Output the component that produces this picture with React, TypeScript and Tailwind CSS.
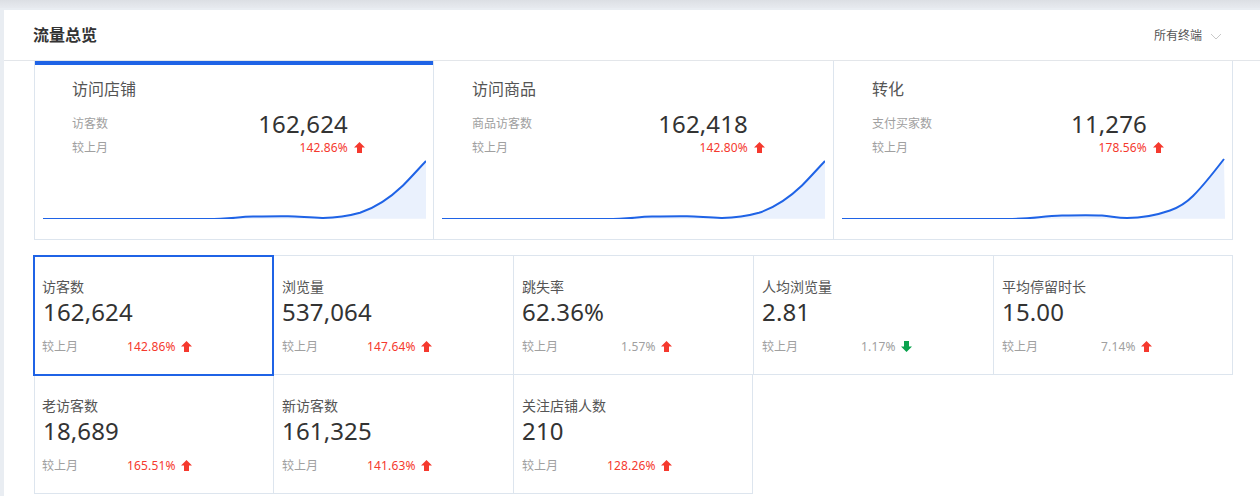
const font = { fontFamily: '"Noto Sans", "Noto Sans CJK SC", sans-serif' };

const storeLine =
  'M0 59 L165 59 C185 59 195 56.9 210 56.6 C225 56.2 235 56 245 56.2 C258 56.5 268 58 280 57.9 C295 57.8 306 55.9 317 52.8 C333 47.5 348 37 360 25.5 C368 17.5 375 9.5 383 1';

const overview = [
  { title: '访问店铺', name: '访客数', value: '162,624', rate: '142.86%', active: true, box: 'w-[399px] pl-[37px]', row: 'w-[276px]', chart: '-ml-[29px]', line: storeLine },
  { title: '访问商品', name: '商品访客数', value: '162,418', rate: '142.80%', active: false, box: 'w-[400px] pl-[38px]', row: 'w-[276px]', chart: '-ml-[30px]', line: storeLine },
  {
    title: '转化',
    name: '支付买家数',
    value: '11,276',
    rate: '178.56%',
    active: false,
    box: 'w-[398px] pl-[38px]',
    row: 'w-[275px]',
    chart: '-ml-[30px]',
    line: 'M0 59 L165 59 C190 59 200 56 220 55.6 C235 55.2 250 55 260 55.6 C270 56.4 275 58 285 58 C300 58 315 55 328 50.5 C338 47 344 43 351 36 C362 25 372 12 382 -1',
  },
];

const metrics = [
  { label: '访客数', value: '162,624', rate: '142.86%', gap: 'ml-[49px]', red: true, up: true, active: true },
  { label: '浏览量', value: '537,064', rate: '147.64%', gap: 'ml-[49px]', red: true, up: true },
  { label: '跳失率', value: '62.36%', rate: '1.57%', gap: 'ml-[63px]', red: false, up: true },
  { label: '人均浏览量', value: '2.81', rate: '1.17%', gap: 'ml-[63px]', red: false, up: false },
  { label: '平均停留时长', value: '15.00', rate: '7.14%', gap: 'ml-[63px]', red: false, up: true, narrow: true },
  { label: '老访客数', value: '18,689', rate: '165.51%', gap: 'ml-[49px]', red: true, up: true },
  { label: '新访客数', value: '161,325', rate: '141.63%', gap: 'ml-[49px]', red: true, up: true },
  { label: '关注店铺人数', value: '210', rate: '128.26%', gap: 'ml-[49px]', red: true, up: true, narrow: true },
];

function Arrow({ up = true, className = '' }: { up?: boolean; className?: string }) {
  return (
    <svg width="11" height="11" viewBox="0 0 11 11" className={`shrink-0 ${className}`}>
      {up ? (
        <path d="M5.5 0 L11 5.4 L8 5.4 L8 11 L3 11 L3 5.4 L0 5.4 Z" fill="#f5392e" />
      ) : (
        <path d="M3 0 L8 0 L8 5.6 L11 5.6 L5.5 11 L0 5.6 L3 5.6 Z" fill="#0ba34e" />
      )}
    </svg>
  );
}

function Chart({ line, className }: { line: string; className: string }) {
  return (
    <svg width="383" height="62" viewBox="0 -3 383 62" className={className}>
      <path d={`${line} L383 58.7 L0 58.7 Z`} fill="#eaf1fd" />
      <path d={line} fill="none" stroke="#1f63e6" strokeWidth="2" />
    </svg>
  );
}

export default function App() {
  return (
    <div className="w-[1260px] h-[496px] overflow-hidden bg-[#e9edf2] pt-[10px] pl-[4px] relative" style={font}>
      <div className="absolute left-0 right-0 top-0 h-[8px] bg-gradient-to-b from-[#dcdfe4] to-[#e7eaef]" />
      <div className="bg-white h-[486px]">
        <div className="h-[51px] border-b border-[#e3e6ea] flex items-center justify-between pl-[29px] pr-[38px]">
          <span className="text-[16px] font-bold text-[#333]">流量总览</span>
          <div className="flex items-center text-[12px] text-[#555] mt-[2px]">
            <span>所有终端</span>
            <svg width="12" height="7" viewBox="0 0 12 7" className="ml-[8px]">
              <path d="M1 1 L6 6 L11 1" fill="none" stroke="#c8c8c8" strokeWidth="1" />
            </svg>
          </div>
        </div>

        <div className="pl-[30px]">
          <div className="flex w-[1199px] h-[179px] border-x border-b border-[#dde5ee]">
            {overview.map((item) => (
              <div key={item.title} className={`relative shrink-0 pt-[18px] border-r border-[#dde5ee] last:border-r-0 ${item.box}`}>
                {item.active && <div className="absolute left-0 right-0 top-0 h-[4px] bg-[#1f63e6]" />}
                <div className="text-[16px] leading-[20px] text-[#555]">{item.title}</div>
                <div className={`mt-[10px] flex items-center justify-between ${item.row}`}>
                  <span className="text-[12px] text-[#a0a0a0]">{item.name}</span>
                  <span className="text-[24px] leading-[30px] tracking-[0.15px] text-[#333]">{item.value}</span>
                </div>
                <div className={`h-[18px] flex items-center justify-between text-[12px] ${item.row}`}>
                  <span className="text-[#a0a0a0]">较上月</span>
                  <div className="flex items-center tracking-[0.15px] text-[#f5392e] -mr-[17px]">
                    {item.rate}
                    <Arrow className="ml-[6px] -mt-[2px]" />
                  </div>
                </div>
                <Chart line={item.line} className={item.chart} />
              </div>
            ))}
          </div>

          <div className="mt-[15px] grid grid-cols-[repeat(5,240px)] w-[1200px]">
            {metrics.map((m, i) => (
              <div
                key={m.label}
                className={`pl-[8px] pt-[22px] border-[#dde5ee] border-b border-r ${i < 5 ? 'h-[120px] border-t' : 'h-[119px]'} ${i % 5 === 0 ? 'border-l' : ''} ${m.active ? 'relative' : ''} ${m.narrow ? 'w-[239px]' : ''}`}
              >
                {m.active && <div className="absolute -left-[2px] -top-px -right-px -bottom-[2px] border-2 border-[#1f63e6]" />}
                <div className={`text-[14px] leading-[18px] text-[#555] ${i % 5 === 0 ? '-ml-px' : ''}`}>{m.label}</div>
                <div className="text-[24px] leading-[32px] tracking-[0.15px] text-[#333]">{m.value}</div>
                <div className={`mt-[10px] flex items-center text-[12px] leading-[18px] ${i % 5 === 0 ? '-ml-px' : ''}`}>
                  <span className="w-[36px] text-[#a0a0a0]">较上月</span>
                  <span className={`tracking-[0.15px] ${m.gap} ${m.red ? 'text-[#f5392e]' : 'text-[#a0a0a0]'}`}>{m.rate}</span>
                  <Arrow up={m.up} className="ml-[5px] -mt-[1px]" />
                </div>
              </div>
            ))}
          </div>
        </div>
      </div>
    </div>
  );
}
